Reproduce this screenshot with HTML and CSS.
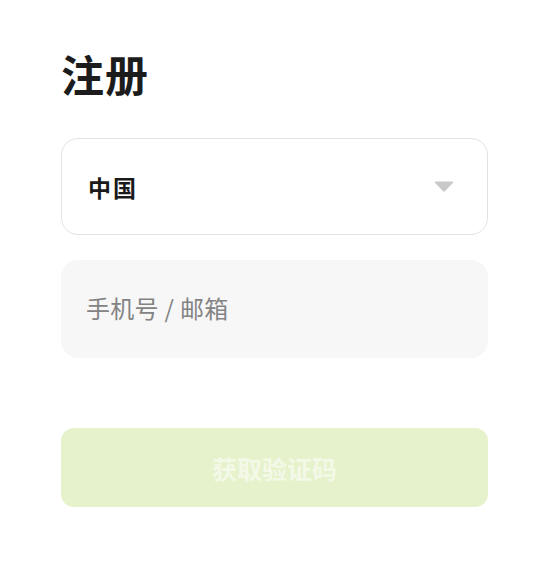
FILE: index.html
```html
<!DOCTYPE html>
<html lang="zh-CN">
<head>
<meta charset="utf-8">
<title>注册</title>
<link rel="stylesheet" href="styles.css">
</head>
<body>
<main class="page">
  <h1 class="title">注册</h1>
  <div class="select">
    <span class="select-value">中国</span>
    <svg class="caret" width="20" height="11" viewBox="0 0 20 11"><path d="M1.5 0.5 H18.5 Q20 0.5 19 1.8 L11.2 10 Q10 11 8.8 10 L1 1.8 Q0 0.5 1.5 0.5 Z" fill="#c9c9c9"/></svg>
  </div>
  <div class="field">
    <span class="placeholder">手机号 / 邮箱</span>
  </div>
  <button class="submit" type="button">获取验证码</button>
</main>
</body>
</html>
```

FILE: styles.css
```css
html, body {
  margin: 0;
  padding: 0;
  background: #ffffff;
}
body {
  font-family: "Noto Sans CJK SC", "Noto Sans", sans-serif;
  color: #1a1a1a;
}
.page {
  width: 427px;
  margin-left: 61px;
  padding-top: 51px;
  display: flex;
  flex-direction: column;
}
.title {
  margin: 0;
  font-size: 43px;
  line-height: 44px;
  font-weight: 700;
  color: #1c1c1c;
  letter-spacing: 1px;
}
.select {
  margin-top: 43px;
  height: 97px;
  box-sizing: border-box;
  border: 1.5px solid #e2e2e2;
  border-radius: 17px;
  display: flex;
  align-items: center;
  justify-content: space-between;
  padding: 1px 33px 0 26px;
}
.select-value {
  font-size: 23px;
  font-weight: 700;
  color: #1a1a1a;
  letter-spacing: 2px;
}
.caret {
  display: block;
  margin-top: -2px;
}
.field {
  margin-top: 25px;
  height: 98px;
  box-sizing: border-box;
  background: #f7f7f7;
  border-radius: 17px;
  display: flex;
  align-items: center;
  padding: 0 25px 3px;
}
.placeholder {
  font-size: 24px;
  color: #838383;
  letter-spacing: 0.3px;
}
.submit {
  margin-top: 70px;
  height: 79px;
  border: none;
  border-radius: 13px;
  background: #e6f2cc;
  color: rgba(255, 255, 255, 0.55);
  font-family: "Noto Sans CJK SC", "Noto Sans", sans-serif;
  font-size: 25px;
  font-weight: 700;
  padding: 0;
}
```
